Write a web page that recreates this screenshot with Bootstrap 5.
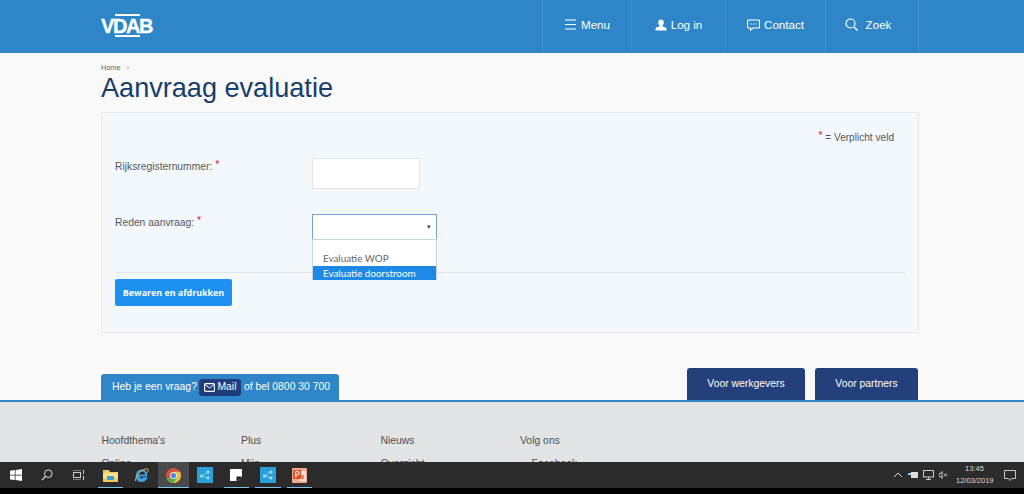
<!DOCTYPE html>
<html lang="nl">
<head>
<meta charset="utf-8">
<title>Aanvraag evaluatie</title>
<link rel="stylesheet" href="https://cdn.jsdelivr.net/npm/bootstrap@5.3.0/dist/css/bootstrap.min.css">
<style>
html,body{height:494px;overflow:hidden}
body{background:#f9f9f9;font-family:"Liberation Sans",Arial,sans-serif;font-size:11.6px;color:#4a4d50}
.site{height:462px;overflow:hidden}
.topbar{height:53px;background:#2e86c8;color:#fff;padding-left:101px;padding-right:105px}
.logo-box{width:54px;height:24px;margin-top:14px;position:relative}
.logo-txt{font-weight:700;font-size:20px;letter-spacing:-1.4px;line-height:24px;display:block;color:#fff;-webkit-text-stroke:.3px #fff}
.logo-line{position:absolute;height:2px;background:#fff;left:14px;width:25px}
.cell{height:53px;border-left:1px solid #3d8fcc;color:#fff;font-size:11.6px;padding-bottom:4px}
.cell svg{flex:none}
.c1{width:89px}.c2{width:94px}.c3{width:100px}.c4{width:94px;border-right:1px solid #3d8fcc;padding-right:8px}
.wrap-main{padding:0 105px 0 101px}
.crumb{font-size:7.3px;color:#666;padding-top:10px;line-height:9px}
.crumb span{color:#b5b5b5;margin-left:3px}
.page-title{font-size:27.1px;font-weight:400;color:#173d6c;line-height:31px;margin:0 0 9px}
.panel{height:221px;background:#f3f8fc;border:1px solid #e4e8ec;position:relative;padding:0 13px}
.legend{padding-top:18px;padding-right:11px;line-height:13px;height:45px;font-size:10.1px;color:#55585c}
.req{color:#e02020;position:relative;top:-2px}
.frow{height:57px}
.flabel{width:197px;font-size:10.3px;padding-top:2px;line-height:13px;color:#55585c}
.flabel-b{padding-top:1px}
.txtbox{width:108px;height:31px;background:#fff;border:1px solid #e2e6ea}
.selbox{width:125px;height:26px;background:#fff;border:1px solid #7a9fd6;margin-top:-1px;font-size:7px;padding-right:5px;color:#444}
.ddlist{position:absolute;left:210px;top:126px;width:125px;height:41px;background:#fff;border:1px solid #c9d3e0;font-family:"Lato",sans-serif;font-size:9.9px;color:#666;z-index:3;padding-top:12px;line-height:13.5px}
.ddlist div{padding-left:10px}
.ddlist .sel{background:#1e88e5;color:#fff;height:14px;line-height:14px}
.sep{position:absolute;left:13px;right:13px;top:159px;border-top:1px solid #dfe3e7}
.savebtn{position:absolute;left:13px;top:166px;width:117px;height:27px;background:#1e90ef;color:#fff;border:none;border-radius:2px;font-family:"Open Sans",sans-serif;font-weight:700;font-size:8.9px;padding:0}
.tabs{height:67px;padding:0 106px 0 101px}
.tab-ask{height:26px;width:238px;background:#2e86c8;border-radius:3px 3px 0 0;color:#fff;padding-left:11px;font-size:10.4px;gap:2.500px}
.mailbtn{background:#1f3d7a;border-radius:3px;height:17px;padding:0 5px;gap:2px;font-size:10.4px}
.tab-dark{height:32px;background:#233f7c;color:#fff;border-radius:3px 3px 0 0;font-size:10.4px}
.t1{width:118px}.t2{width:103px;margin-left:10px}
.foot{height:100px;background:#e3e4e6;border-top:2px solid #2e86c8;padding:32px 0 0 101.500px;font-size:10.4px;color:#4d4f52;line-height:13px}
.fcol{width:139.500px}
.fcol p{margin:0 0 10px}
.taskbar{height:26px;background:#2b2b2b;color:#ddd}
.tb{width:31.500px;height:26px;position:relative}
.tb.on::after{content:"";position:absolute;left:3px;right:3px;bottom:0;height:1px;background:#7fc4e8}
.tb.act{background:#4a4a4a}
.tb.act::after{left:0;right:0}
.tray{width:123px;font-size:7.5px;line-height:12px;margin-right:8px}
.gap5{margin-left:5px}
.clock{text-align:center;width:37px;margin-left:8px;white-space:nowrap}
.notif{margin-left:11px}
.blackbar{height:6px;background:#000}
</style>
</head>
<body>
<div class="site">
  <header class="topbar d-flex justify-content-between">
    <div class="logo-box">
      <span class="logo-line" style="top:0"></span>
      <span class="logo-txt">VDAB</span>
      <span class="logo-line" style="top:21px"></span>
    </div>
    <nav class="d-flex">
      <div class="cell c1 d-flex align-items-center justify-content-center gap-1">
        <svg width="13" height="11" viewBox="0 0 13 11"><path d="M1 1h11M1 5.500h11M1 10h11" stroke="#fff" stroke-width="1.200" fill="none"/></svg><span>Menu</span>
      </div>
      <div class="cell c2 d-flex align-items-center justify-content-center gap-1">
        <svg width="12" height="12" viewBox="0 0 12 12"><path d="M6 0.500a2.800 3 0 0 1 2.800 3c0 1.500-.7 2.500-1.400 3v1c1.700.4 4.100 1 4.100 2.500V11.500H.5V10c0-1.500 2.400-2.100 4.100-2.500v-1C3.900 6 3.200 5 3.200 3.500A2.800 3 0 0 1 6 .5z" fill="#fff"/></svg><span>Log in</span>
      </div>
      <div class="cell c3 d-flex align-items-center justify-content-center gap-1">
        <svg width="13" height="12" viewBox="0 0 13 12"><path d="M1.500 1h10a1 1 0 0 1 1 1v6a1 1 0 0 1-1 1H6L3.500 11V9h-2a1 1 0 0 1-1-1V2a1 1 0 0 1 1-1z" stroke="#fff" stroke-width="1.200" fill="none"/><path d="M3.500 5h1.200M6 5h1.200M8.500 5h1.200" stroke="#fff" stroke-width="1.200"/></svg><span>Contact</span>
      </div>
      <div class="cell c4 d-flex align-items-center justify-content-center gap-2">
        <svg width="13" height="13" viewBox="0 0 13 13"><circle cx="5.500" cy="5.500" r="4.500" stroke="#fff" stroke-width="1.200" fill="none"/><path d="M9 9l3.500 3.500" stroke="#fff" stroke-width="1.400"/></svg><span>Zoek</span>
      </div>
    </nav>
  </header>

  <main class="wrap-main">
    <div class="crumb">Home <span>&gt;</span></div>
    <h1 class="page-title">Aanvraag evaluatie</h1>
    <div class="panel">
      <div class="legend text-end"><span class="req">*</span> = Verplicht veld</div>
      <div class="frow d-flex">
        <div class="flabel">Rijksregisternummer: <span class="req">*</span></div>
        <div class="txtbox"></div>
      </div>
      <div class="frow d-flex">
        <div class="flabel flabel-b">Reden aanvraag: <span class="req">*</span></div>
        <div class="selbox d-flex align-items-center justify-content-end">&#9662;</div>
      </div>
      <div class="ddlist">
        <div>Evaluatie WOP</div>
        <div class="sel">Evaluatie doorstroom</div>
      </div>
      <div class="sep"></div>
      <button class="savebtn" type="button">Bewaren en afdrukken</button>
    </div>
  </main>

  <div class="tabs d-flex justify-content-between align-items-end">
    <div class="tab-ask d-flex align-items-center">
      <span>Heb je een vraag?</span>
      <span class="mailbtn d-flex align-items-center">
        <svg width="11" height="9" viewBox="0 0 11 9"><rect x=".6" y=".6" width="9.800" height="7.800" rx="1" stroke="#fff" fill="none" stroke-width="1.100"/><path d="M1 1.500l4.500 3.500 4.500-3.500" stroke="#fff" fill="none"/></svg>
        <span>Mail</span>
      </span>
      <span>of bel 0800 30 700</span>
    </div>
    <div class="d-flex">
      <div class="tab-dark t1 d-flex align-items-center justify-content-center">Voor werkgevers</div>
      <div class="tab-dark t2 d-flex align-items-center justify-content-center">Voor partners</div>
    </div>
  </div>

  <footer class="foot d-flex">
    <div class="fcol"><p>Hoofdthema's</p><p>Online</p></div>
    <div class="fcol"><p>Plus</p><p>Mijn</p></div>
    <div class="fcol"><p>Nieuws</p><p>Overzicht</p></div>
    <div class="fcol"><p>Volg ons</p><p>&nbsp;&nbsp;&nbsp;&nbsp;Facebook</p></div>
  </footer>
</div>

<div class="taskbar d-flex justify-content-between">
  <div class="d-flex">
    <div class="tb d-flex align-items-center justify-content-center">
      <svg width="12" height="12" viewBox="0 0 12 12"><path d="M0 1.700l4.800-.7v4.700H0zM5.500.9L12 0v5.700H5.500zM0 6.400h4.800v4.700L0 10.400zM5.500 6.400H12V12l-6.500-.9z" fill="#fff"/></svg>
    </div>
    <div class="tb d-flex align-items-center justify-content-center">
      <svg width="12" height="12" viewBox="0 0 12 12"><circle cx="7.300" cy="4.700" r="3.800" stroke="#ddd" fill="none"/><path d="M4.500 7.500L.8 11.200" stroke="#ddd" stroke-width="1.200"/></svg>
    </div>
    <div class="tb d-flex align-items-center justify-content-center">
      <svg width="12" height="10" viewBox="0 0 12 10"><path d="M0 0h8M0 10h8" stroke="#ccc"/><rect x=".5" y="2.500" width="7" height="5" stroke="#ccc" fill="none"/><path d="M10.500 0v4M10.500 6v4" stroke="#ccc"/></svg>
    </div>
    <div class="tb on d-flex align-items-center justify-content-center">
      <svg width="15" height="13" viewBox="0 0 15 13"><path d="M0 1h6l1 2h8v10H0z" fill="#f3c95c"/><rect y="4" width="15" height="5" fill="#fbe08a"/><rect x="4" y="7" width="7" height="4" fill="#3aa0dc"/></svg>
    </div>
    <div class="tb d-flex align-items-center justify-content-center">
      <svg width="16" height="16" viewBox="0 0 16 16"><path d="M2.700 8.500h9.600c0-3-1.700-5-4.500-5S3 5.700 2.700 8.700c-.3 3.600 2 5.300 4.800 5.300 2.300 0 3.900-1 4.600-2.800H9.700c-.5.800-1.200 1.200-2.200 1.200-1.500 0-2.500-1-2.600-2.900" fill="none" stroke="#3aa0e8" stroke-width="2"/><path d="M1.500 14C1 12 4 5 10 2.500c2-.8 4-1 4.300.2.200 1-.5 2.300-1 3" fill="none" stroke="#e0c040" stroke-width="1"/></svg>
    </div>
    <div class="tb on act d-flex align-items-center justify-content-center">
      <svg width="15" height="15" viewBox="0 0 16 16"><circle cx="8" cy="8" r="8" fill="#d9503f"/><path d="M8 8L1.100 12A8 8 0 0 0 8 16a8 8 0 0 0 6.900-12H8z" fill="#e8c13f"/><path d="M8 8L1.100 12A8 8 0 0 0 8 16l3.500-6z" fill="#4da851"/><circle cx="8" cy="8" r="3.600" fill="#fff"/><circle cx="8" cy="8" r="2.800" fill="#4a8af0"/></svg>
    </div>
    <div class="tb d-flex align-items-center justify-content-center">
      <svg width="16" height="16" viewBox="0 0 16 16"><rect width="16" height="16" fill="#2a9fd8"/><circle cx="4.500" cy="9" r="1.500" fill="#a8e0f5"/><circle cx="11" cy="5" r="1.500" fill="#a8e0f5"/><circle cx="11" cy="11" r="1.500" fill="#a8e0f5"/><path d="M4.500 9L11 5M4.500 9L11 11" stroke="#a8e0f5" stroke-width=".7"/></svg>
    </div>
    <div class="tb on d-flex align-items-center justify-content-center">
      <svg width="12" height="12" viewBox="0 0 12 12"><path d="M0 0h12v7.500L7.500 12H0z" fill="#fff"/><path d="M6.500 7.500H12L7.500 12H6.500z" fill="#222"/></svg>
    </div>
    <div class="tb on d-flex align-items-center justify-content-center">
      <svg width="16" height="16" viewBox="0 0 16 16"><rect width="16" height="16" fill="#2a9fd8"/><circle cx="4.500" cy="9" r="1.500" fill="#a8e0f5"/><circle cx="11" cy="5" r="1.500" fill="#a8e0f5"/><circle cx="11" cy="11" r="1.500" fill="#a8e0f5"/><path d="M4.500 9L11 5M4.500 9L11 11" stroke="#a8e0f5" stroke-width=".7"/></svg>
    </div>
    <div class="tb on d-flex align-items-center justify-content-center">
      <svg width="15" height="15" viewBox="0 0 15 15"><rect width="15" height="15" rx="1" fill="#f0a98c"/><rect x="7" y="3" width="7" height="10" fill="#fbe6db"/><circle cx="10" cy="9" r="2.500" fill="#e58a6a"/><path d="M1 2h8v9H1z" fill="#d9552f"/><path d="M3.800 9.500v-6h1.800a1.600 1.600 0 0 1 0 3.300H3.800" stroke="#fff" fill="none"/></svg>
    </div>
  </div>
  <div class="tray d-flex align-items-center">
    <svg width="10" height="6" viewBox="0 0 10 6"><path d="M1 5l4-4 4 4" stroke="#ddd" fill="none"/></svg>
    <svg width="10" height="8" viewBox="0 0 10 8" class="gap5"><rect x="3" y="1" width="7" height="6" fill="#ddd"/><rect y="2" width="3" height="2" fill="#8cf"/></svg>
    <svg width="11" height="10" viewBox="0 0 11 10" class="gap5"><rect x=".5" y=".5" width="10" height="6.500" stroke="#ccc" fill="none"/><path d="M5.500 7v2M3 9.500h5" stroke="#ccc"/></svg>
    <svg width="9" height="8" viewBox="0 0 9 8" class="gap5"><path d="M0 2.500h1.500L3 .5v7L1.500 5.500H0zM5 2.500l3 3M8 2.500l-3 3" stroke="#ccc" fill="none"/></svg>
    <div class="clock"><div>13:45</div><div>12/03/2019</div></div>
    <svg width="12" height="11" viewBox="0 0 12 11" class="notif"><path d="M.5.500h11v8H7.500L6 10.500 4.500 8.500H.5z" stroke="#ccc" fill="none"/></svg>
  </div>
</div>
<div class="blackbar"></div>
<script src="https://cdn.jsdelivr.net/npm/bootstrap@5.3.0/dist/js/bootstrap.bundle.min.js"></script>
</body>
</html>
